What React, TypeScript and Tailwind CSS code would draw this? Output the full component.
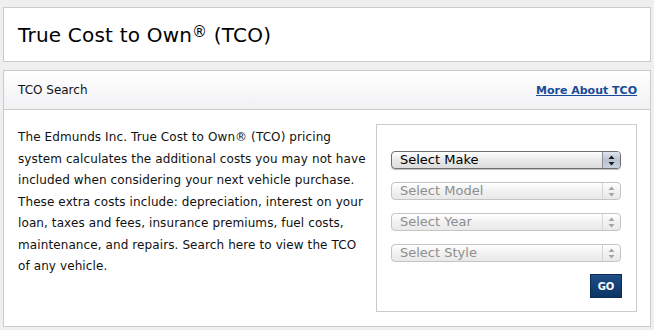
import React from 'react'

const font = { fontFamily: '"DejaVu Sans", Verdana, sans-serif' }

interface FakeSelectProps {
    label: string
    active?: boolean
}

const FakeSelect: React.FC<FakeSelectProps> = ({ label, active }) => {
    return (
        <div
            className={
                'flex h-[18px] w-[230px] items-stretch overflow-hidden rounded-[4px] border ' +
                (active
                    ? 'border-[#6e6e73] bg-gradient-to-b from-[#ffffff] via-[#e9e9e9] to-[#dcdcdc] shadow-[0_1px_1px_rgba(0,0,0,0.25)]'
                    : 'border-[#c4c4c4] bg-gradient-to-b from-[#ffffff] via-[#f1f1f1] to-[#e9e9e9]')
            }
        >
            <span className={'flex-1 pl-[8px] text-[13px] leading-[16px] ' + (active ? 'text-black' : 'text-[#8e8e8e]')}>
                {label}
            </span>
            {/* :::Arrows */}
            <span
                className={
                    'flex w-[18px] flex-col items-center justify-center border-l ' +
                    (active
                        ? 'border-[#8a8f99] bg-gradient-to-b from-[#dfe5ee] via-[#b9c3d2] to-[#c9d1dd]'
                        : 'border-[#d6d6d6]')
                }
            >
                <svg width="7" height="11" viewBox="0 0 7 11">
                    <path d="M3.5 0.5 L6.5 4 L0.5 4 Z" fill={active ? '#1b1b1b' : '#a4a4a4'} />
                    <path d="M3.5 10.5 L6.5 7 L0.5 7 Z" fill={active ? '#1b1b1b' : '#a4a4a4'} />
                </svg>
            </span>
        </div>
    )
}

export default function App() {
    return (
        <div className="h-[330px] w-[654px] overflow-hidden bg-[#efefef] px-[3px] pt-[7px]" style={font}>
            {/* ::Title box */}
            <div className="flex h-[55px] items-center border border-[#cbcbcb] bg-white pl-[14px]">
                <h1 className="text-[20px] tracking-[0.2px] text-black">
                    True Cost to Own<sup className="relative -top-[5px] text-[15px]">®</sup> (TCO)
                </h1>
            </div>

            {/* ::TCO Search box */}
            <div className="mt-[8px] h-[257px] border border-[#cbcbcb] bg-white">
                {/* :::Header */}
                <div className="flex h-[39px] items-center justify-between border-b border-[#cbcbcb] bg-gradient-to-b from-[#ffffff] to-[#f1f0f3] pl-[14px] pr-[13px]">
                    <span className="text-[12px] text-[#111]">TCO Search</span>
                    <a href="#more" className="pt-[2px] text-[11px] font-bold text-[#1b4b96] underline">
                        More About TCO
                    </a>
                </div>

                {/* :::Body */}
                <div className="flex justify-between pl-[14px] pr-[13px] pt-[14px]">
                    <p className="w-[350px] pt-[3px] text-[12px] leading-[21.5px] tracking-[0.1px] text-[#111]">
                        The Edmunds Inc. True Cost to Own® (TCO) pricing system calculates the additional costs you may not have
                        included when considering your next vehicle purchase. These extra costs include: depreciation, interest
                        on your loan, taxes and fees, insurance premiums, fuel costs, maintenance, and repairs. Search here to
                        view the TCO of any vehicle.
                    </p>

                    {/* :::Search form */}
                    <div className="flex h-[188px] w-[261px] flex-col border border-[#cbcbcb] pl-[14px] pt-[26px]">
                        <div className="flex flex-col gap-[13px]">
                            <FakeSelect label="Select Make" active />
                            <FakeSelect label="Select Model" />
                            <FakeSelect label="Select Year" />
                            <FakeSelect label="Select Style" />
                        </div>
                        <div className="mt-[12px] flex w-[231px] justify-end">
                            <button className="h-[24px] w-[32px] border border-[#0d2c55] bg-gradient-to-b from-[#1f4f86] to-[#0c3466] text-[10px] font-bold text-white">
                                GO
                            </button>
                        </div>
                    </div>
                </div>
            </div>
        </div>
    )
}
